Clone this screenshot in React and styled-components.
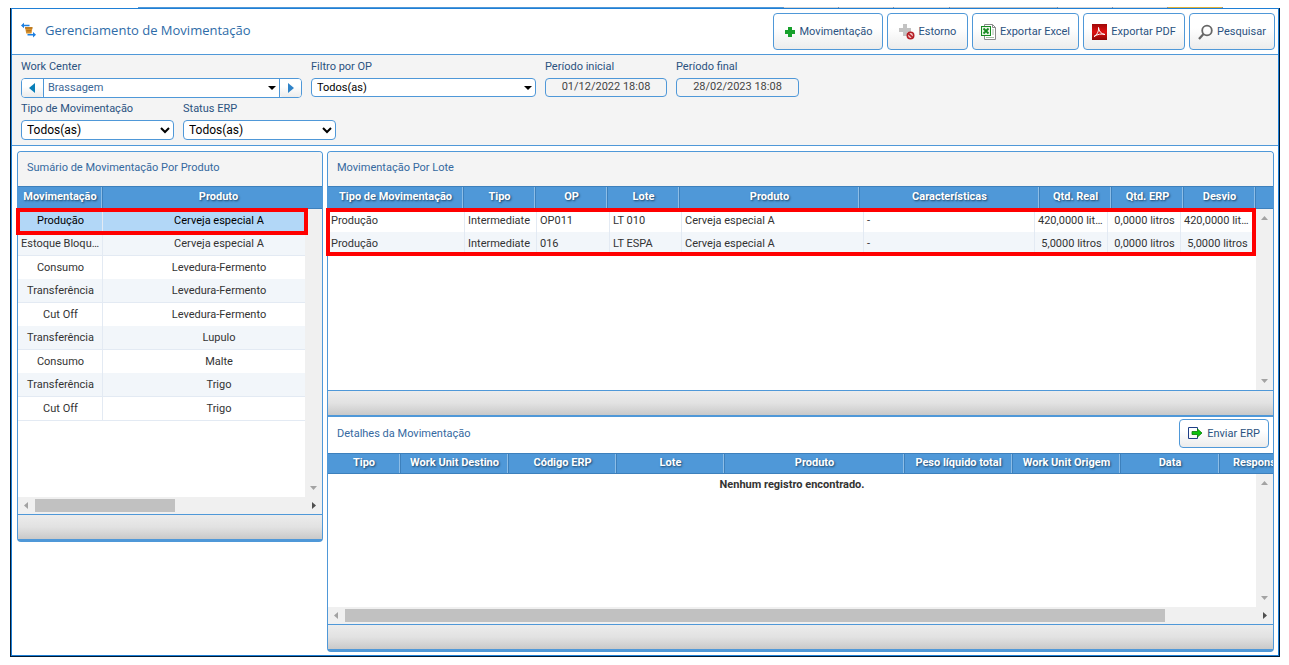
import React from 'react';
import styled, { createGlobalStyle } from 'styled-components';

const blue = '#4f98d8';
const darkBlue = '#3d80bc';
const labelColor = '#2b5280';

const GlobalStyle = createGlobalStyle`
  * {
    box-sizing: border-box;
  }
  body {
    margin: 0;
    background: #ffffff;
    font-family: Roboto, 'Liberation Sans', sans-serif;
    font-size: 11px;
    color: #333333;
  }
  button, input, select {
    font-family: inherit;
    font-size: 11px;
    margin: 0;
  }
`;

const Page = styled.div`
  padding: 7px 9px 8px 10px;
`;

const TabStrip = styled.div`
  display: flex;
  height: 1px;
  padding-left: 128px;
`;

const TabEdge = styled.div`
  flex: 0 0 ${props => props.width}px;
  background: ${props => props.color};
  border-right: 1px solid #8090a8;
`;

const Frame = styled.div`
  border: 1px solid #001a33;
  border-top: 0;
`;

const FrameInner = styled.main`
  border: 1px solid #1e7fd6;
  background: #ffffff;
`;

const Header = styled.header`
  display: flex;
  align-items: center;
  justify-content: space-between;
  height: 46px;
  padding: 0 3px 0 9px;
  border-bottom: 1px solid ${blue};
`;

const Title = styled.h1`
  display: flex;
  align-items: center;
  gap: 9px;
  margin: 0;
  padding-bottom: 3px;
  font-family: 'Open Sans', sans-serif;
  font-size: 13px;
  font-weight: 400;
  color: #2e6ca8;
`;

const Toolbar = styled.div`
  display: flex;
  gap: 4px;
`;

const Button = styled.button`
  display: flex;
  align-items: center;
  justify-content: center;
  gap: 4px;
  min-width: ${props => props.width}px;
  height: ${props => props.height || 37}px;
  padding: 0 6px;
  border: 1px solid ${blue};
  border-radius: 4px;
  background: linear-gradient(#ffffff 40%, #ececec);
  color: ${labelColor};
  white-space: nowrap;
`;

const Filters = styled.form`
  display: flex;
  flex-direction: column;
  gap: 3px;
  padding: 4px 9px 5px;
  background: #f4f4f4;
  border-bottom: 1px solid ${blue};
`;

const FilterRow = styled.div`
  display: flex;
  gap: 9px;
`;

const Field = styled.div`
  flex: 0 1 ${props => props.width}px;
`;

const Label = styled.label`
  display: block;
  height: 19px;
  line-height: 16px;
  color: ${labelColor};
`;

const Stepper = styled.div`
  display: flex;
  height: 20px;
  border: 1px solid ${blue};
  border-radius: 4px;
  background: #ffffff;
`;

const StepButton = styled.button`
  display: flex;
  align-items: center;
  justify-content: center;
  width: 21px;
  padding: 0;
  border: 0;
  border-radius: 3px;
  background: linear-gradient(#ffffff 40%, #ececec);
`;

const SelectBox = styled.div`
  position: relative;
  flex: 1;
`;

const FlatSelect = styled.select`
  display: block;
  appearance: none;
  width: 100%;
  height: ${props => (props.$framed ? 19 : 18)}px;
  padding: ${props => (props.$framed ? '0 20px 0 5px' : '0 20px 2px 4px')};
  border: solid ${blue};
  border-width: ${props => (props.$framed ? '1px' : '0 1px')};
  border-radius: ${props => (props.$framed ? 4 : 0)}px;
  background: #ffffff;
  color: ${props => (props.$framed ? '#000000' : '#3b6796')};
`;

const SelectCaret = styled.span`
  position: absolute;
  top: 50%;
  right: 4px;
  margin-top: -2px;
  border: 4px solid transparent;
  border-top-color: #000000;
  border-bottom: 0;
  pointer-events: none;
`;

const Select = styled.select`
  display: block;
  width: 100%;
  height: 20px;
  padding: 0 1px;
  border: 1px solid ${blue};
  border-radius: 4px;
  background-color: #ffffff;
  color: #000000;
  && {
    font-size: 12px;
  }
`;

const DateInput = styled.input`
  display: block;
  width: 100%;
  height: 19px;
  padding: 0 0 2px;
  border: 1px solid ${blue};
  border-radius: 4px;
  background: #f4f4f4;
  color: #444444;
  text-align: center;
`;

const Content = styled.div`
  display: flex;
  align-items: flex-start;
  gap: 4px;
  padding: 5px 4px 3px 5px;
`;

const Panel = styled.section`
  flex: ${props => props.flex};
  min-width: 0;
  border: 1px solid ${blue};
  border-bottom-width: 3px;
  border-radius: 4px;
`;

const PanelHeader = styled.div`
  display: flex;
  align-items: center;
  justify-content: space-between;
  height: ${props => (props.$plain ? 36 : 34)}px;
  padding: 0 4px 4px 9px;
  border-radius: 4px 4px 0 0;
  background: ${props => (props.$plain ? '#ffffff' : '#f4f4f4')};
`;

const PanelTitle = styled.h2`
  margin: 0;
  font-size: 11px;
  font-weight: 400;
  color: #35699f;
`;

const HeadScroll = styled.div`
  overflow: hidden;
`;

const Table = styled.table`
  table-layout: fixed;
  width: ${props => props.width || '100%'};
  border-spacing: 0;
`;

const HeadCell = styled.th`
  height: ${props => props.height || 23}px;
  padding: 0 2px 2px;
  border-top: 1px solid ${darkBlue};
  border-bottom: 1px solid ${darkBlue};
  border-right: 1px solid ${darkBlue};
  background: ${blue};
  box-shadow: inset -1px 0 #8dbde6;
  color: #ffffff;
  font-weight: 700;
  text-shadow: 1px 1px 2px #1c4468;
  white-space: nowrap;
  &:last-child {
    border-right: 0;
    box-shadow: none;
  }
`;

const Body = styled.div`
  position: relative;
  display: flex;
  height: ${props => props.height}px;
`;

const BodyMain = styled.div`
  flex: 1;
  min-width: 0;
  overflow: hidden;
  padding-right: ${props => props.$inset || 0}px;
`;

const Row = styled.tr`
  background: ${props => (props.$selected ? '#b2d7f7' : '#ffffff')};
  color: ${props => (props.$selected ? '#000000' : '#333333')};
  &:nth-child(even) {
    background: #f2f6fa;
  }
`;

const Cell = styled.td`
  overflow: hidden;
  height: ${props => (props.$lined ? 24 : 23)}px;
  padding: 0 2px 0 3px;
  border-right: 1px solid #e3eaf3;
  border-bottom: ${props => (props.$lined ? '1px solid #e3eaf3' : '0')};
  text-align: ${props => props.align || 'left'};
  text-overflow: ellipsis;
  white-space: nowrap;
  &:last-child {
    border-right: 0;
  }
`;

const EmptyMessage = styled.p`
  margin: 0;
  line-height: 21px;
  font-weight: 700;
  text-align: center;
`;

const Highlight = styled.div`
  position: absolute;
  top: -1px;
  left: -2px;
  right: ${props => props.$right}px;
  height: ${props => props.height}px;
  border: 4px solid #ff0000;
  pointer-events: none;
`;

const VerticalBar = styled.div`
  display: flex;
  flex-direction: column;
  align-items: center;
  justify-content: ${props => (props.$downOnly ? 'flex-end' : 'space-between')};
  width: 17px;
  padding: 7px 0;
  background: #f0f0f0;
`;

const HorizontalBar = styled.div`
  display: flex;
  align-items: center;
  gap: 7px;
  height: 17px;
  padding: 0 6px;
  background: #f0f0f0;
`;

const Track = styled.div`
  flex: 1;
`;

const Thumb = styled.div`
  width: ${props => props.width};
  height: 13px;
  background: #c1c1c1;
`;

const PanelFooter = styled.div`
  height: ${props => (props.$divided ? 27 : 25)}px;
  border-top: 1px solid ${blue};
  border-bottom: ${props => (props.$divided ? `2px solid ${blue}` : '0')};
  background: linear-gradient(#ececec, #e2e2e2 50%, #c9c9c9);
`;

const arrows = {
  up: '0,4 7,4 3.5,0',
  down: '0,0 7,0 3.5,4',
  left: '4,0 4,7 0,3.5',
  right: '0,0 0,7 4,3.5',
};

const Arrow = ({ dir, color = '#a3a3a3' }) => {
  const upright = dir === 'up' || dir === 'down';
  const w = upright ? 7 : 4;
  const h = upright ? 4 : 7;
  return (
    <svg width={w} height={h} viewBox={`0 0 ${w} ${h}`} aria-hidden="true">
      <polygon points={arrows[dir]} fill={color} />
    </svg>
  );
};

const StepArrow = ({ points, color }) => (
  <svg width="7" height="10" viewBox="0 0 7 10" aria-hidden="true">
    <polygon points={points} fill={color} />
  </svg>
);

const MovementIcon = () => (
  <svg width="15" height="16" viewBox="0 0 15 16" aria-hidden="true">
    <path d="M0 3.5 3 .8v1.900h5.500v1.600H3v1.900Z" fill="#1d7fe0" />
    <path d="M4 5h7.500l-1 6.500H5.200Z" fill="#d6912f" />
    <path d="M4 6h7.500M5.500 8.800h4.500" stroke="#a96817" strokeWidth="1" />
    <path d="M15 12.800 12 10v1.900H6.500v1.700H12v1.900Z" fill="#1d7fe0" />
  </svg>
);

const PlusIcon = () => (
  <svg width="12" height="12" viewBox="0 0 12 12" aria-hidden="true">
    <path d="M4 1h4v3h3v4H8v3H4V8H1V4h3Z" fill="#17a02b" />
  </svg>
);

const ReverseIcon = () => (
  <svg width="16" height="16" viewBox="0 0 16 16" aria-hidden="true">
    <path d="M4 0h4v4h4v4H8v4H4V8H0V4h4Z" fill="#c3c3c3" />
    <circle cx="11.5" cy="11.5" r="3.2" fill="#f5caca" stroke="#b61f26" strokeWidth="1.6" />
    <path d="m9.200 9.400 4.600 4.200" stroke="#b61f26" strokeWidth="1.6" />
  </svg>
);

const ExcelIcon = () => (
  <svg width="15" height="16" viewBox="0 0 15 16" aria-hidden="true">
    <path d="M3.5.5h8l3 3v12h-11Z" fill="#ffffff" stroke="#8a8a8a" />
    <path d="M11.5.5v3h3" fill="none" stroke="#8a8a8a" />
    <path d="M11 6h2M11 8h2M11 10h2M5 13.5h8" stroke="#a8bda8" />
    <rect x="0.5" y="2.5" width="9" height="9" fill="#e9f5e5" stroke="#178a22" />
    <path d="m2.5 4.5 5 5M7.5 4.5l-5 5" stroke="#178a22" strokeWidth="1.8" />
  </svg>
);

const PdfIcon = () => (
  <svg width="15" height="16" viewBox="0 0 15 16" aria-hidden="true">
    <defs>
      <linearGradient id="pdfRed" x1="0" y1="0" x2="0" y2="1">
        <stop offset="0" stopColor="#a00808" />
        <stop offset="0.5" stopColor="#e01010" />
        <stop offset="1" stopColor="#8c0505" />
      </linearGradient>
    </defs>
    <rect width="15" height="16" fill="url(#pdfRed)" />
    <path
      d="M2 12.500C5 11 7 7 6.500 3.500 6.800 7 9 10 13 10.500 9 9.500 6 10 2 12.500Z"
      fill="none"
      stroke="#ffffff"
      strokeWidth="1"
      strokeLinejoin="round"
    />
  </svg>
);

const SearchIcon = () => (
  <svg width="15" height="16" viewBox="0 0 15 16" aria-hidden="true">
    <circle cx="9" cy="6.5" r="4.8" fill="none" stroke="#666666" strokeWidth="1.8" />
    <path d="m5.500 10-4.500 5" stroke="#666666" strokeWidth="2.2" />
  </svg>
);

const SendIcon = () => (
  <svg width="15" height="12" viewBox="0 0 15 12" aria-hidden="true">
    <path d="M9.500 3V.500h-9v11h9V9" fill="none" stroke="#1f3f86" />
    <path d="M4 4.500h5.500v-2.500L14 6l-4.500 4V7.500H4Z" fill="#0bc20b" stroke="#087808" strokeWidth="0.8" />
  </svg>
);

const summary = [
  ['Produção', 'Cerveja especial A'],
  ['Estoque Bloqueado', 'Cerveja especial A'],
  ['Consumo', 'Levedura-Fermento'],
  ['Transferência', 'Levedura-Fermento'],
  ['Cut Off', 'Levedura-Fermento'],
  ['Transferência', 'Lupulo'],
  ['Consumo', 'Malte'],
  ['Transferência', 'Trigo'],
  ['Cut Off', 'Trigo'],
];

const summaryHead = [
  ['Movimentação', 85],
  ['Produto', 231],
];

const lotHead = [
  ['Tipo de Movimentação', 136],
  ['Tipo', 72],
  ['OP', 72],
  ['Lote', 72],
  ['Produto', 180],
  ['Características', 180],
  ['Qtd. Real', 72],
  ['Qtd. ERP', 72],
  ['Desvio', 72],
  ['', 17],
];

const lotWidths = [137, 72, 73, 72, 182, 171, 73, 73, 72];

const lots = [
  ['Produção', 'Intermediate', 'OP011', 'LT 010', 'Cerveja especial A', '-', '420,0000 litros', '0,0000 litros', '420,0000 litros'],
  ['Produção', 'Intermediate', '016', 'LT ESPA', 'Cerveja especial A', '-', '5,0000 litros', '0,0000 litros', '5,0000 litros'],
];

const detailHead = [
  ['Tipo', 73],
  ['Work Unit Destino', 108],
  ['Código ERP', 108],
  ['Lote', 108],
  ['Produto', 180],
  ['Peso líquido total', 108],
  ['Work Unit Origem', 108],
  ['Data', 99],
  ['Responsável', 89],
];

const Columns = ({ widths }) => (
  <colgroup>
    {widths.map((width, i) => (
      <col key={i} style={{ width }} />
    ))}
  </colgroup>
);

const TableHead = ({ columns, width, height }) => (
  <HeadScroll>
    <Table width={width}>
      <Columns widths={columns.map(column => column[1])} />
      <thead>
        <tr>
          {columns.map(([name], i) => (
            <HeadCell key={i} scope="col" height={height}>{name}</HeadCell>
          ))}
        </tr>
      </thead>
    </Table>
  </HeadScroll>
);

const ScrollY = ({ downOnly }) => (
  <VerticalBar $downOnly={downOnly}>
    {!downOnly && <Arrow dir="up" />}
    <Arrow dir="down" />
  </VerticalBar>
);

const ScrollX = ({ thumb }) => (
  <HorizontalBar>
    <Arrow dir="left" />
    <Track>
      <Thumb width={thumb} />
    </Track>
    <Arrow dir="right" color="#505050" />
  </HorizontalBar>
);

const SummaryPanel = () => (
  <Panel flex="0 0 306px">
    <PanelHeader>
      <PanelTitle>Sumário de Movimentação Por Produto</PanelTitle>
    </PanelHeader>
    <TableHead columns={summaryHead} width="316px" />
    <Body height={288}>
      <BodyMain>
        <Table width="316px">
          <Columns widths={[85, 231]} />
          <tbody>
            {summary.map(([movement, product], i) => {
              const lined = i % 2 === 1 || i === summary.length - 1;
              return (
                <Row key={i} $selected={i === 0}>
                  <Cell align="center" $lined={lined}>{movement}</Cell>
                  <Cell align="center" $lined={lined}>{product}</Cell>
                </Row>
              );
            })}
          </tbody>
        </Table>
      </BodyMain>
      <ScrollY downOnly />
      <Highlight height={27} $right={14} />
    </Body>
    <ScrollX thumb="52%" />
    <PanelFooter />
  </Panel>
);

const LotPanel = () => (
  <Panel flex="1">
    <PanelHeader>
      <PanelTitle>Movimentação Por Lote</PanelTitle>
    </PanelHeader>
    <TableHead columns={lotHead} />
    <Body height={181}>
      <BodyMain $inset={3}>
        <Table>
          <Columns widths={lotWidths} />
          <tbody>
            {lots.map((lot, i) => (
              <Row key={i}>
                {lot.map((value, j) => (
                  <Cell key={j} align={j > 5 ? 'center' : 'left'}>{value}</Cell>
                ))}
              </Row>
            ))}
          </tbody>
        </Table>
      </BodyMain>
      <ScrollY />
      <Highlight height={48} $right={17} />
    </Body>
    <PanelFooter $divided />
    <PanelHeader $plain>
      <PanelTitle>Detalhes da Movimentação</PanelTitle>
      <Button type="button" width={90} height={29}>
        <SendIcon />
        Enviar ERP
      </Button>
    </PanelHeader>
    <TableHead columns={detailHead} width="981px" height={21} />
    <Body height={133}>
      <BodyMain>
        <EmptyMessage>Nenhum registro encontrado.</EmptyMessage>
      </BodyMain>
      <ScrollY />
    </Body>
    <ScrollX thumb="90%" />
    <PanelFooter />
  </Panel>
);

const App = () => (
  <>
    <GlobalStyle />
    <Page>
      <TabStrip>
        <TabEdge width={646} color={blue} />
        <TabEdge width={55} color="#d4d4d4" />
        <TabEdge width={55} color="#d4d4d4" />
        <TabEdge width={56} color="#d4d4d4" />
        <TabEdge width={108} color="#c4c4c4" />
        <TabEdge width={55} color="#d4d4d4" />
        <TabEdge width={55} color="#d4d4d4" />
        <TabEdge width={55} color="#e0b23c" />
      </TabStrip>
      <Frame>
        <FrameInner>
          <Header>
            <Title>
              <MovementIcon />
              Gerenciamento de Movimentação
            </Title>
            <Toolbar>
              <Button type="button" width={110}><PlusIcon />Movimentação</Button>
              <Button type="button" width={81}><ReverseIcon />Estorno</Button>
              <Button type="button" width={107}><ExcelIcon />Exportar Excel</Button>
              <Button type="button" width={102}><PdfIcon />Exportar PDF</Button>
              <Button type="button" width={86}><SearchIcon />Pesquisar</Button>
            </Toolbar>
          </Header>
          <Filters>
            <FilterRow>
              <Field width={281}>
                <Label htmlFor="workCenter">Work Center</Label>
                <Stepper>
                  <StepButton type="button" aria-label="Anterior">
                    <StepArrow points="6,0 6,10 0,5" color="#0a7fb8" />
                  </StepButton>
                  <SelectBox>
                    <FlatSelect id="workCenter">
                      <option>Brassagem</option>
                    </FlatSelect>
                    <SelectCaret />
                  </SelectBox>
                  <StepButton type="button" aria-label="Próximo">
                    <StepArrow points="1,0 1,10 7,5" color="#2f83c8" />
                  </StepButton>
                </Stepper>
              </Field>
              <Field width={225}>
                <Label htmlFor="order">Filtro por OP</Label>
                <SelectBox>
                  <FlatSelect id="order" $framed>
                    <option>Todos(as)</option>
                  </FlatSelect>
                  <SelectCaret />
                </SelectBox>
              </Field>
              <Field width={122}>
                <Label htmlFor="start">Período inicial</Label>
                <DateInput id="start" defaultValue="01/12/2022 18:08" />
              </Field>
              <Field width={123}>
                <Label htmlFor="end">Período final</Label>
                <DateInput id="end" defaultValue="28/02/2023 18:08" />
              </Field>
            </FilterRow>
            <FilterRow>
              <Field width={153}>
                <Label htmlFor="type">Tipo de Movimentação</Label>
                <Select id="type">
                  <option>Todos(as)</option>
                </Select>
              </Field>
              <Field width={153}>
                <Label htmlFor="status">Status ERP</Label>
                <Select id="status">
                  <option>Todos(as)</option>
                </Select>
              </Field>
            </FilterRow>
          </Filters>
          <Content>
            <SummaryPanel />
            <LotPanel />
          </Content>
        </FrameInner>
      </Frame>
    </Page>
  </>
);

export default App;
